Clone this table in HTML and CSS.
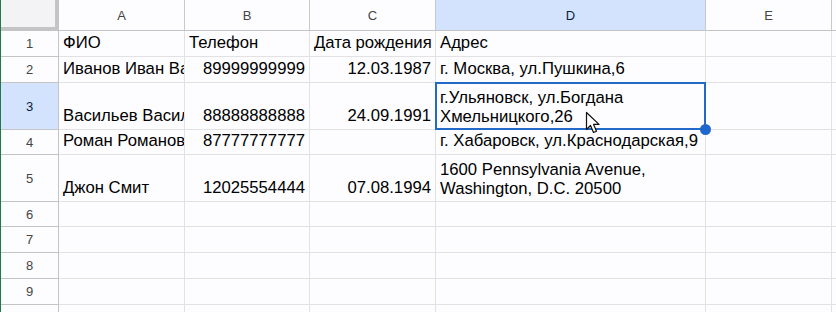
FILE: index.html
```html
<!DOCTYPE html>
<html lang="ru">
<head>
<meta charset="utf-8">
<link rel="stylesheet" href="styles.css">
<title>Sheet</title>
</head>
<body>
<div class="sheet">
  <div class="grid">
    <div class="corner"></div>
    <div class="ch">A</div>
    <div class="ch">B</div>
    <div class="ch">C</div>
    <div class="ch ch-sel">D</div>
    <div class="ch">E</div>
    <div class="ch ch-last"></div>

    <div class="rh">1</div>
    <div class="c">ФИО</div>
    <div class="c">Телефон</div>
    <div class="c">Дата рождения</div>
    <div class="c">Адрес</div>
    <div class="c"></div>
    <div class="c c-last"></div>

    <div class="rh">2</div>
    <div class="c">Иванов Иван Васильевич</div>
    <div class="c num">89999999999</div>
    <div class="c num">12.03.1987</div>
    <div class="c">г. Москва, ул.Пушкина,6</div>
    <div class="c"></div>
    <div class="c c-last"></div>

    <div class="rh rh-sel">3</div>
    <div class="c">Васильев Василий</div>
    <div class="c num">88888888888</div>
    <div class="c num">24.09.1991</div>
    <div class="c wrap sel">г.Ульяновск, ул.Богдана Хмельницкого,26<span class="selbox"></span><span class="handle"></span></div>
    <div class="c"></div>
    <div class="c c-last"></div>

    <div class="rh">4</div>
    <div class="c">Роман Романов</div>
    <div class="c num">87777777777</div>
    <div class="c num"></div>
    <div class="c">г. Хабаровск, ул.Краснодарская,9</div>
    <div class="c"></div>
    <div class="c c-last"></div>

    <div class="rh">5</div>
    <div class="c">Джон Смит</div>
    <div class="c num">12025554444</div>
    <div class="c num">07.08.1994</div>
    <div class="c wrap">1600 Pennsylvania Avenue, Washington, D.C. 20500</div>
    <div class="c"></div>
    <div class="c c-last"></div>

    <div class="rh">6</div>
    <div class="c"></div><div class="c"></div><div class="c"></div><div class="c"></div><div class="c"></div><div class="c c-last"></div>
    <div class="rh">7</div>
    <div class="c"></div><div class="c"></div><div class="c"></div><div class="c"></div><div class="c"></div><div class="c c-last"></div>
    <div class="rh">8</div>
    <div class="c"></div><div class="c"></div><div class="c"></div><div class="c"></div><div class="c"></div><div class="c c-last"></div>
    <div class="rh">9</div>
    <div class="c"></div><div class="c"></div><div class="c"></div><div class="c"></div><div class="c"></div><div class="c c-last"></div>
    <div class="rh"></div>
    <div class="c"></div><div class="c"></div><div class="c"></div><div class="c"></div><div class="c"></div><div class="c c-last"></div>
  </div>
  <svg class="cursor" width="16" height="23" viewBox="0 0 16 23" aria-hidden="true">
    <path d="M1.5 1.5 L1.5 18.5 L5.5 14.5 L8.5 21.5 L11.5 20.2 L8.6 13.4 L14 13.4 Z" fill="#fff" stroke="#111" stroke-width="1.2" stroke-linejoin="round"/>
  </svg>
</div>
</body>
</html>
```

FILE: styles.css
```css
* { box-sizing: border-box; }
html, body {
  margin: 0;
  padding: 0;
  background: #fdfdff;
  overflow: hidden;
}
.sheet {
  position: relative;
  width: 836px;
  height: 312px;
  border-left: 1px solid #1e7a46;
  font-family: "Liberation Sans", Arial, sans-serif;
  overflow: hidden;
}
.grid {
  display: grid;
  grid-template-columns: 58px 126px 125px 126px 270px 126px 40px;
  grid-template-rows: 31px 26px 26px 47px 25px 47px 25px 26px 26px 26px 26px;
}
.corner {
  background: #f3f3f5;
  border-right: 4px solid #c4c4c4;
  border-bottom: 4px solid #c4c4c4;
}
.ch {
  display: flex;
  align-items: center;
  justify-content: center;
  font-size: 13px;
  color: #444;
  background: #fdfdff;
  border-right: 1px solid #c8c8cc;
  border-bottom: 1px solid #c4c4c4;
  padding-top: 1px;
}
.ch-sel {
  background: #d3e3fd;
  color: #0b1e3d;
}
.ch-last { border-right: none; }
.rh {
  display: flex;
  align-items: center;
  justify-content: center;
  font-size: 13px;
  color: #444;
  background: #fdfdff;
  border-right: 1px solid #c4c4c4;
  border-bottom: 1px solid #c4c4c4;
}
.rh-sel {
  background: #d3e3fd;
  color: #0b1e3d;
}
.c {
  position: relative;
  display: flex;
  align-items: flex-end;
  padding: 0 4px 4px 4px;
  font-size: 16.7px;
  line-height: 19px;
  color: #000;
  white-space: nowrap;
  overflow: hidden;
  border-right: 1px solid #e2e2e4;
  border-bottom: 1px solid #e2e2e4;
}
.num { justify-content: flex-end; }
.wrap {
  white-space: normal;
  align-items: flex-start;
  padding-top: 5px;
}
.c-last { border-right: none; }
.sel { overflow: visible; z-index: 2; }
.selbox {
  position: absolute;
  left: -1px;
  top: -1px;
  right: -1px;
  bottom: -1px;
  border: 2px solid #2269c8;
  pointer-events: none;
}
.handle {
  position: absolute;
  right: -6px;
  bottom: -6px;
  width: 11px;
  height: 11px;
  border-radius: 50%;
  background: #1f66cc;
}
.cursor {
  position: absolute;
  left: 584px;
  top: 111px;
  z-index: 5;
}
```
